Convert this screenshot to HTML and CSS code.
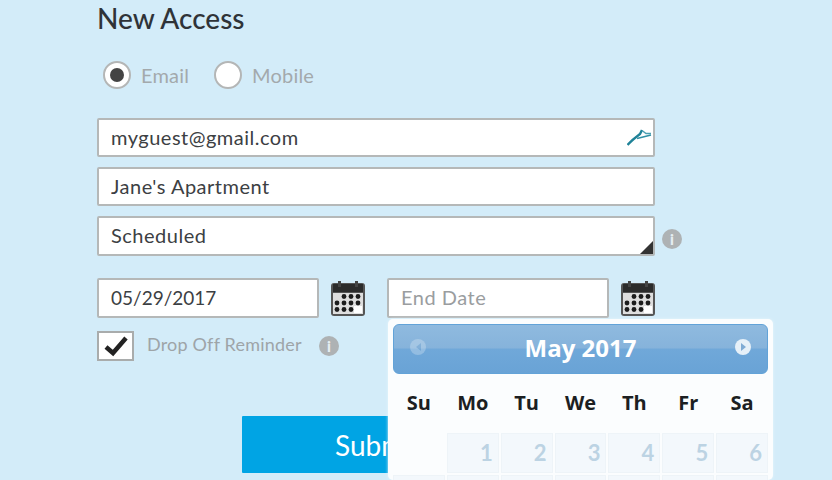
FILE: index.html
```html
<!DOCTYPE html>
<html lang="en">
<head>
    <meta charset="UTF-8">
    <meta name="viewport" content="width=device-width, initial-scale=1.0">
    <title>New Access</title>
    <link rel="stylesheet" href="styles.css">
</head>
<body>
    <div class="form-container">
        <h2>New Access</h2>

        <div class="radio-row">
            <label class="radio-item"><span class="radio checked"></span>Email</label>
            <label class="radio-item"><span class="radio"></span>Mobile</label>
        </div>

        <div class="field email-field">
            <input type="text" value="myguest@gmail.com">
            <svg class="field-logo" width="26" height="20" viewBox="0 0 26 20">
                <path d="M0.5 17 C5 12 9 9 13 6 L15 2" fill="none" stroke="#1f8298" stroke-width="2.4"/>
                <path d="M15 2.5 L19 5.5 L24 5.5" fill="none" stroke="#4a9fb2" stroke-width="1.5"/>
                <path d="M24 7 L10 10.5" fill="none" stroke="#2f8fa5" stroke-width="1.8"/>
            </svg>
        </div>
        <div class="field">
            <input type="text" value="Jane's Apartment">
        </div>
        <div class="select-row">
            <div class="field select-field">
                <input type="text" value="Scheduled" readonly>
                <span class="select-corner"></span>
            </div>
            <span class="info">i</span>
        </div>

        <div class="date-row">
            <div class="date-col">
                <input class="date-input" type="text" value="05/29/2017">
                <svg class="cal-icon" width="34" height="35" viewBox="0 0 34 35">
                    <use href="#cal"/>
                </svg>
            </div>
            <div class="date-col end-col">
                <input class="date-input" type="text" placeholder="End Date">
                <svg class="cal-icon" width="34" height="35" viewBox="0 0 34 35">
                    <use href="#cal"/>
                </svg>

                <div class="calendar">
                    <div class="cal-header">
                        <span class="cal-nav prev"><i></i></span>
                        <span class="cal-title">May 2017</span>
                        <span class="cal-nav next"><i></i></span>
                    </div>
                    <div class="cal-days">
                        <span>Su</span><span>Mo</span><span>Tu</span><span>We</span><span>Th</span><span>Fr</span><span>Sa</span>
                    </div>
                    <div class="cal-grid">
                        <span class="blank"></span>
                        <span>1</span><span>2</span><span>3</span><span>4</span><span>5</span><span>6</span>
                        <span></span><span></span><span></span><span></span><span></span><span></span><span></span>
                    </div>
                </div>
            </div>
        </div>

        <div class="reminder-row">
            <span class="checkbox">
                <svg width="26" height="22" viewBox="0 0 26 22">
                    <path d="M3 12 L10 18 L23 3" fill="none" stroke="#222" stroke-width="4.5"/>
                </svg>
            </span>
            <span class="reminder-label">Drop Off Reminder</span>
            <span class="info">i</span>
        </div>

        <div class="btn-container">
            <button type="button">Submit</button>
        </div>
    </div>

    <!-- calendar glyph used by both date fields -->
    <svg width="0" height="0" class="defs">
        <symbol id="cal" viewBox="0 0 34 35">
            <rect x="0" y="2" width="34" height="33" rx="3" fill="#555"/>
            <rect x="2" y="3" width="30" height="8" fill="#2b2b2b"/>
            <rect x="7" y="0" width="3" height="6" fill="#444"/>
            <rect x="24" y="0" width="3" height="6" fill="#444"/>
            <rect x="2" y="12" width="30" height="21" fill="#dedede"/>
            <rect x="23" y="25" width="8" height="7" fill="#fff"/>
            <g fill="#1c1c1c">
                <circle cx="13" cy="15.5" r="2.4"/><circle cx="20" cy="15.5" r="2.4"/><circle cx="27" cy="15.5" r="2.4"/>
                <circle cx="6" cy="22" r="2.4"/><circle cx="13" cy="22" r="2.4"/><circle cx="20" cy="22" r="2.4"/><circle cx="27" cy="22" r="2.4"/>
                <circle cx="6" cy="28.5" r="2.4"/><circle cx="13" cy="28.5" r="2.4"/><circle cx="20" cy="28.5" r="2.4"/>
            </g>
        </symbol>
    </svg>
</body>
</html>
```

FILE: styles.css
```css
/* page */
html, body {
    height: 480px;
    overflow: hidden;
}

body {
    margin: 0;
    background-color: #d3ecf9;
    font-family: Lato, "Open Sans", sans-serif;
    color: #333;
}

.form-container {
    width: 558px;
    margin-left: 97px;
    padding-top: 2px;
}

h2 {
    margin: 0;
    font-size: 28px;
    line-height: 32px;
    font-weight: 500;
    color: #2f3338;
}

/* radios */
.radio-row {
    display: flex;
    margin: 26px 0 0 6px;
    height: 30px;
}

.radio-item {
    display: flex;
    align-items: center;
    width: 111px;
    font-size: 20px;
    letter-spacing: 0.2px;
    color: #a3a9ac;
}

.radio {
    width: 24px;
    height: 24px;
    margin-right: 10px;
    border: 2px solid #b4b6b6;
    border-radius: 50%;
    background-color: #fff;
    display: flex;
    align-items: center;
    justify-content: center;
}

.radio.checked::after {
    content: "";
    width: 14px;
    height: 14px;
    border-radius: 50%;
    background-color: #444;
}

/* text fields */
.field {
    position: relative;
    margin-bottom: 10px;
}

.email-field {
    margin-top: 28px;
}

input {
    display: block;
    box-sizing: border-box;
    width: 100%;
    height: 39px;
    padding: 0 12px 2px;
    border: 2px solid #b5b8b8;
    border-radius: 2px;
    background-color: #fff;
    font-family: Lato, "Open Sans", sans-serif;
    font-size: 20px;
    letter-spacing: 0.5px;
    color: #3c4043;
}

input::placeholder {
    color: #9a9d9f;
}

.field-logo {
    position: absolute;
    right: 2px;
    top: 10px;
}

.select-row {
    position: relative;
}

.select-field {
    margin-bottom: 0;
}

.select-field input {
    height: 40px;
}

.select-corner {
    position: absolute;
    right: 2px;
    bottom: 2px;
    border-style: solid;
    border-width: 0 0 13px 13px;
    border-color: transparent transparent #333 transparent;
}

.info {
    display: inline-block;
    width: 20px;
    height: 20px;
    border-radius: 50%;
    background-color: #aeb2b4;
    color: #e6eef2;
    font-size: 15px;
    font-weight: 900;
    line-height: 20px;
    text-align: center;
}

.select-row .info {
    position: absolute;
    left: 565px;
    top: 13px;
}

/* dates */
.date-row {
    display: flex;
    margin-top: 22px;
    gap: 22px;
}

.date-col {
    position: relative;
    display: flex;
    align-items: center;
    gap: 12px;
}

.date-input {
    width: 222px;
    height: 40px;
    font-size: 19px;
    letter-spacing: 0;
}

.end-col .date-input {
    font-size: 20px;
    letter-spacing: 0.5px;
}

.cal-icon {
    flex: none;
}

.defs {
    position: absolute;
}

/* calendar popup */
.calendar {
    position: absolute;
    left: 1px;
    top: 41px;
    box-sizing: border-box;
    width: 385px;
    height: 161px;
    overflow: hidden;
    padding: 5px;
    border-radius: 5px;
    background-color: #fbfdfe;
    box-shadow: 0 0 3px #e8f5fc;
    z-index: 2;
}

.cal-header {
    box-sizing: border-box;
    height: 50px;
    display: flex;
    align-items: center;
    justify-content: space-between;
    padding: 0 16px 4px;
    border: 1px solid #62a3d8;
    border-radius: 6px;
    background: linear-gradient(to bottom, #8fbadf 0%, #86b3db 48%, #70a8d9 50%, #69a3d6 100%);
}

.cal-title {
    color: #fff;
    font-family: "Open Sans", sans-serif;
    font-size: 24px;
    font-weight: 700;
}

.cal-nav {
    width: 16px;
    height: 16px;
    border-radius: 50%;
    background-color: #e6f0f8;
    display: flex;
    align-items: center;
    justify-content: center;
}

.cal-nav.prev {
    opacity: 0.3;
}

.cal-nav i {
    border-style: solid;
    border-width: 4px 0 4px 5px;
    border-color: transparent transparent transparent #7fabd4;
}

.cal-nav.prev i {
    border-width: 4px 5px 4px 0;
    border-color: transparent #7fabd4 transparent transparent;
}

.cal-days,
.cal-grid {
    display: grid;
    grid-template-columns: repeat(7, 1fr);
    gap: 2px;
    width: 375px;
}

.cal-days {
    height: 59px;
    padding-bottom: 2px;
    box-sizing: border-box;
    align-items: center;
    text-align: center;
    font-family: "Open Sans", sans-serif;
    font-size: 20px;
    font-weight: 700;
    color: #1c1f22;
}

.cal-grid span {
    box-sizing: border-box;
    height: 40px;
    padding: 5px 5px 0 0;
    border: 1px solid #eef4f8;
    background-color: #f3f8fc;
    color: #bcd3e3;
    font-size: 22px;
    font-weight: 700;
    text-align: right;
}

.cal-grid .blank {
    border: 0;
    background: none;
}

/* reminder */
.reminder-row {
    display: flex;
    align-items: center;
    margin-top: 13px;
}

.checkbox {
    box-sizing: border-box;
    width: 37px;
    height: 30px;
    border: 2px solid #a9acac;
    background-color: #fff;
    display: flex;
    align-items: center;
    justify-content: center;
}

.reminder-label {
    margin-left: 13px;
    padding-bottom: 4px;
    width: 172px;
    font-size: 18px;
    letter-spacing: 0.2px;
    color: #9ea4a8;
}

/* submit */
.btn-container {
    margin: 55px 0 0 145px;
}

button {
    width: 272px;
    height: 57px;
    border: 0;
    border-radius: 1px;
    background-color: #00a4e4;
    color: #fff;
    font-family: Lato, "Open Sans", sans-serif;
    font-size: 28px;
}
```
